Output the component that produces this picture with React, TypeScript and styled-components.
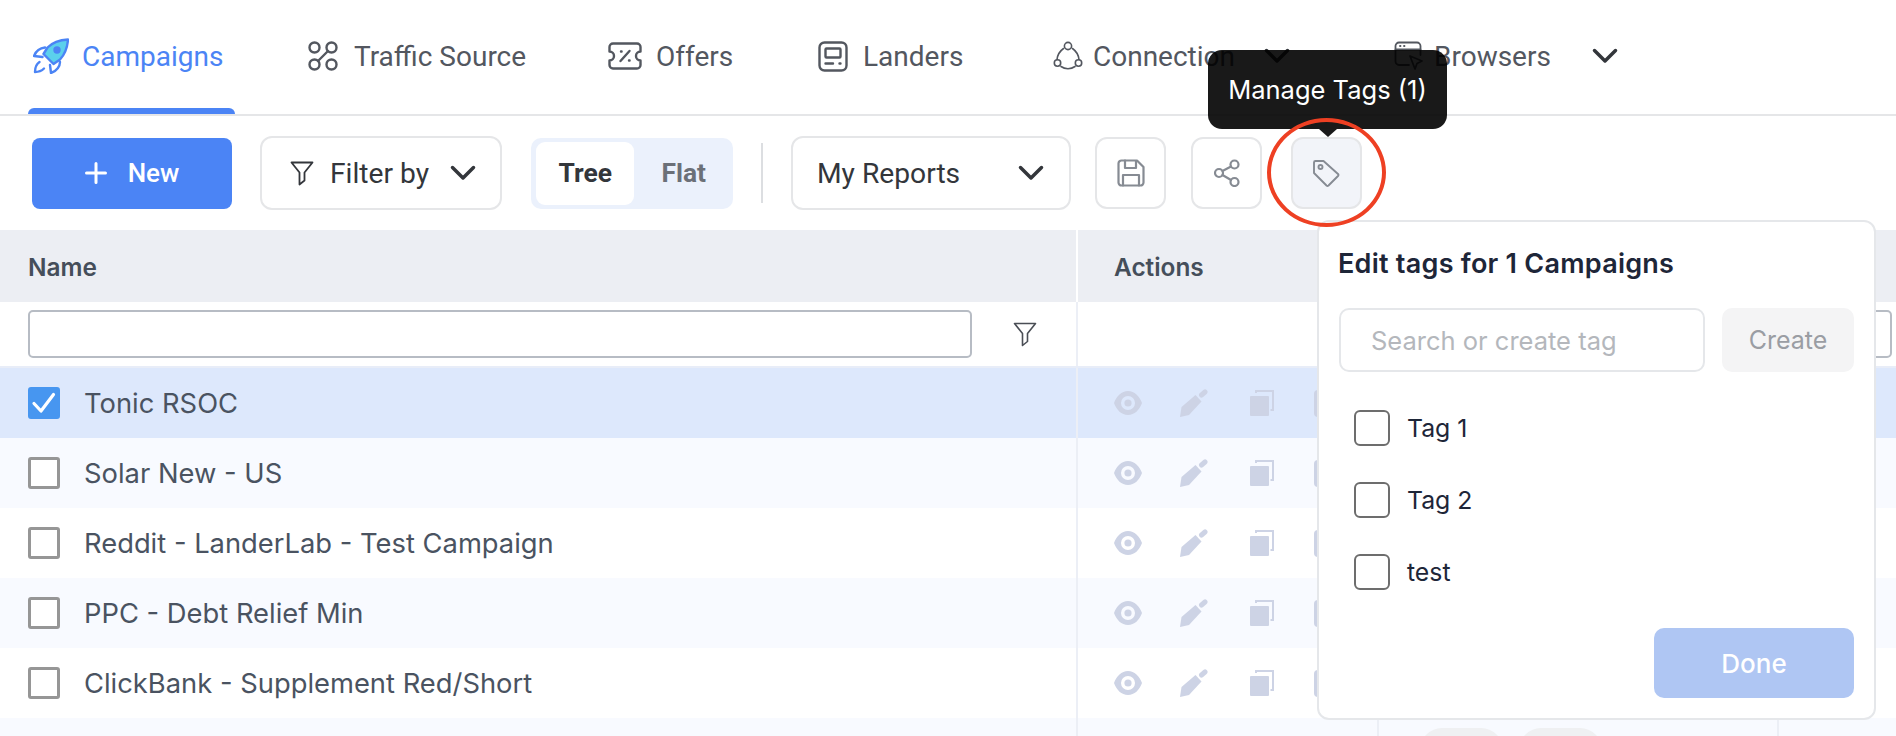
import React from "react";
import styled, { createGlobalStyle } from "styled-components";

const Global = createGlobalStyle`
  html, body { margin: 0; padding: 0; background: #fff; overflow: hidden; }
  body { width: 1896px; height: 736px; font-family: Roboto, "Liberation Sans", sans-serif; }
  * { box-sizing: border-box; }
`;

const Page = styled.div`
  position: relative;
  width: 1896px;
  height: 736px;
  overflow: hidden;
  background: #fff;
`;

/* ---------- top navigation ---------- */
const Nav = styled.nav`
  display: flex;
  align-items: center;
  height: 116px;
  padding: 0 0 0 28px;
  border-bottom: 2px solid #e5e6e8;
`;
const Tab = styled.div<{ $active?: boolean; $width: number; $gap?: number }>`
  position: relative;
  display: flex;
  align-items: center;
  gap: ${(p) => p.$gap ?? 15}px;
  width: ${(p) => p.$width}px;
  height: 114px;
  padding-left: 5px;
  padding-bottom: 2px;
  font-size: 28px;
  color: ${(p) => (p.$active ? "#4b84f5" : "#53575f")};
  ${(p) =>
    p.$active &&
    `&::after { content: ""; position: absolute; left: 0; bottom: 0; width: 207px; height: 6px; background: #4b84f5; border-radius: 6px 6px 0 0; }`}
`;
const TabIcon = styled.svg`
  flex: none;
  fill: none;
  stroke: currentColor;
  stroke-width: 2.4;
  stroke-linecap: round;
  stroke-linejoin: round;
`;
const TabChevron = styled.svg<{ $left: number }>`
  flex: none;
  margin-left: ${(p) => p.$left}px;
  fill: none;
  stroke: #33363b;
  stroke-width: 3.5;
  stroke-linecap: round;
  stroke-linejoin: round;
`;

/* ---------- toolbar ---------- */
const Toolbar = styled.div`
  display: flex;
  align-items: center;
  height: 114px;
  padding-left: 32px;
`;
const NewButton = styled.button`
  display: flex;
  align-items: center;
  justify-content: center;
  gap: 21px;
  width: 200px;
  height: 71px;
  margin-right: 28px;
  border: 0;
  border-radius: 8px;
  background: #4b84f5;
  color: #fff;
  font: 500 26px Roboto, sans-serif;
`;
const SelectButton = styled.div<{ $width: number; $pl: number; $gap: number; $mr: number }>`
  display: flex;
  align-items: center;
  gap: ${(p) => p.$gap}px;
  width: ${(p) => p.$width}px;
  height: 74px;
  margin-right: ${(p) => p.$mr}px;
  padding-left: ${(p) => p.$pl}px;
  border: 2px solid #e5e6e8;
  border-radius: 12px;
  background: #fff;
  color: #33363b;
  font-size: 28.2px;
`;
const SelectLabel = styled.span<{ $width: number }>`
  width: ${(p) => p.$width}px;
  white-space: nowrap;
`;
const Toggle = styled.div`
  display: flex;
  align-items: center;
  width: 202px;
  height: 71px;
  margin-right: 28px;
  padding: 0 5px;
  border-radius: 10px;
  background: #ebf1fc;
`;
const ToggleItem = styled.div<{ $on?: boolean }>`
  display: flex;
  align-items: center;
  justify-content: center;
  width: ${(p) => (p.$on ? 99 : 94)}px;
  height: 63px;
  padding-left: ${(p) => (p.$on ? 0 : 5)}px;
  border-radius: 9px;
  background: ${(p) => (p.$on ? "#fff" : "transparent")};
  color: ${(p) => (p.$on ? "#33363b" : "#6b7078")};
  font-size: 26.4px;
  font-weight: 700;
`;
const Separator = styled.div`
  width: 2px;
  height: 60px;
  margin-right: 28px;
  background: #dcdee1;
`;
const IconButton = styled.button<{ $on?: boolean; $mr: number }>`
  display: flex;
  align-items: center;
  justify-content: center;
  width: 71px;
  height: 72px;
  margin-right: ${(p) => p.$mr}px;
  padding: 0;
  border: 2px solid #e5e6e8;
  border-radius: 12px;
  background: ${(p) => (p.$on ? "#f2f4f9" : "#fff")};
`;
const ToolIcon = styled.svg<{ $thin?: boolean }>`
  fill: none;
  stroke: #868b93;
  stroke-width: ${(p) => (p.$thin ? 1.9 : 2.2)};
  stroke-linecap: round;
  stroke-linejoin: round;
`;

/* ---------- table ---------- */
const COLS = "1076px 301px 400px 119px";
const HeaderRow = styled.div`
  display: grid;
  grid-template-columns: ${COLS};
  height: 72px;
  background: #eceef3;
  color: #454e5a;
  font-family: Inter, Roboto, sans-serif;
  font-size: 24.4px;
  font-weight: 600;
`;
const HeaderCell = styled.div<{ $pl: number; $sep?: boolean }>`
  display: flex;
  align-items: center;
  padding-top: 1px;
  padding-left: ${(p) => p.$pl}px;
  ${(p) => p.$sep && "border-left: 2px solid #fff;"}
  white-space: nowrap;
  overflow: hidden;
`;
const FilterRow = styled.div`
  display: grid;
  grid-template-columns: ${COLS};
  height: 66px;
  border-bottom: 2px solid #e8edf8;
`;
const FilterCell = styled.div<{ $sep?: boolean }>`
  display: flex;
  align-items: center;
  justify-content: flex-end;
  padding: 0 4px 0 0;
  ${(p) => p.$sep && "border-left: 2px solid #eceff6;"}
`;
const NameFilterCell = styled.div`
  display: flex;
  align-items: center;
  gap: 41px;
  padding-left: 28px;
`;
const FilterInput = styled.div<{ $width: number }>`
  width: ${(p) => p.$width}px;
  height: 48px;
  border: 2px solid #b7bcc4;
  border-radius: 5px;
  background: #fff;
`;
const Row = styled.div<{ $bg: string }>`
  display: grid;
  grid-template-columns: ${COLS};
  height: 70px;
  background: ${(p) => p.$bg};
`;
const NameCell = styled.div`
  display: flex;
  align-items: center;
  gap: 24px;
  padding-left: 28px;
  color: #4a5361;
  font-family: Inter, Roboto, sans-serif;
  font-size: 27.35px;
  white-space: nowrap;
`;
const Check = styled.span<{ $on?: boolean }>`
  display: flex;
  align-items: center;
  justify-content: center;
  flex: none;
  width: 32px;
  height: 32px;
  border: 3.5px solid ${(p) => (p.$on ? "#4796f0" : "#969696")};
  border-radius: 3px;
  background: ${(p) => (p.$on ? "#4796f0" : "#fff")};
`;
const Cell = styled.div<{ $sep?: boolean }>`
  display: flex;
  align-items: center;
  ${(p) => p.$sep && "border-left: 2px solid #eceff6;"}
`;
const ActionsCell = styled(Cell)`
  padding-left: 36px;
  border-left: 2px solid #eceff6;
  overflow: hidden;
`;
const ActionBox = styled.span<{ $pitch: number }>`
  display: flex;
  flex: none;
  width: ${(p) => p.$pitch}px;
`;
const ActionIcon = styled.svg`
  display: block;
  fill: #cdd3e5;
`;
const TagsCell = styled(Cell)`
  gap: 16px;
  padding-left: 41px;
`;
const Chip = styled.span`
  width: 83px;
  height: 50px;
  border-radius: 22px;
  background: #eff0f2;
`;

/* ---------- overlays ---------- */
const Tooltip = styled.div`
  position: absolute;
  left: 1208px;
  top: 50px;
  display: flex;
  align-items: center;
  justify-content: center;
  width: 239px;
  height: 79px;
  border-radius: 14px;
  background: rgba(0, 0, 0, 0.9);
  color: #fff;
  font-family: Inter, Roboto, sans-serif;
  font-size: 25.5px;
  white-space: nowrap;
  z-index: 3;
  &::after {
    content: "";
    position: absolute;
    left: 111px;
    bottom: -8px;
    border-left: 9px solid transparent;
    border-right: 9px solid transparent;
    border-top: 8px solid #1a1a1a;
  }
`;
const Highlight = styled.div`
  position: absolute;
  left: 1267px;
  top: 118px;
  width: 119px;
  height: 109px;
  border: 4px solid #ee4023;
  border-radius: 50%;
  z-index: 4;
`;
const Popover = styled.div`
  position: absolute;
  left: 1317px;
  top: 220px;
  display: flex;
  flex-direction: column;
  width: 559px;
  height: 500px;
  padding: 0 20px 20px;
  border: 2px solid #e5e7ea;
  border-radius: 12px;
  background: #fff;
  font-family: Inter, Roboto, sans-serif;
  z-index: 2;
`;
const PopTitle = styled.div`
  margin: 23px 0 0 -1px;
  height: 38px;
  line-height: 38px;
  color: #1e2638;
  font-size: 27px;
  font-weight: 600;
  letter-spacing: 0.25px;
  white-space: nowrap;
`;
const CreateRow = styled.div`
  display: flex;
  gap: 17px;
  margin-top: 25px;
`;
const TagInput = styled.div`
  display: flex;
  align-items: center;
  width: 366px;
  height: 64px;
  padding-left: 30px;
  border: 2px solid #e5e7ea;
  border-radius: 10px;
  color: #b4b7bc;
  font-size: 25.5px;
  white-space: nowrap;
`;
const CreateButton = styled.div`
  display: flex;
  align-items: center;
  justify-content: center;
  width: 132px;
  height: 64px;
  border-radius: 10px;
  background: #f4f4f5;
  color: #9a9da3;
  font-size: 25px;
`;
const TagList = styled.div`
  display: flex;
  flex-direction: column;
  gap: 36px;
  margin-top: 38px;
  padding-left: 15px;
`;
const TagItem = styled.label`
  display: flex;
  align-items: center;
  gap: 17px;
  color: #1e2638;
  font-size: 24.8px;
`;
const TagBox = styled.span`
  flex: none;
  width: 36px;
  height: 36px;
  border: 2px solid #6d6d6d;
  border-radius: 6px;
  background: #fff;
`;
const DoneButton = styled.div`
  display: flex;
  align-items: center;
  justify-content: center;
  align-self: flex-end;
  width: 200px;
  height: 70px;
  margin-top: auto;
  border-radius: 10px;
  background: #afc6f3;
  color: #fff;
  font-size: 26px;
  font-weight: 500;
`;

/* ---------- drawings ---------- */
const Chevron = ({ left }: { left: number }) => (
  <TabChevron $left={left} width="26" height="16" viewBox="0 0 26 16">
    <path d="M2.5 2.5L13 13L23.5 2.5" />
  </TabChevron>
);
const Rocket = () => (
  <svg width="36" height="36" viewBox="0 0 36 36" fill="none" stroke="#4b84f5" strokeWidth="2.4" strokeLinecap="round" strokeLinejoin="round" style={{ flex: "none" }}>
    <path d="M35 1.5C27 2 20 4 14.5 9.5L10.5 16L20.5 26L27 21.5C32 16 34.5 9 35 1.5Z" fill="#5bd0ec" />
    <circle cx="24" cy="12" r="3.7" fill="#4b84f5" stroke="none" />
    <path d="M12 9.5C7 10 3 13 1 18L9.5 19" />
    <path d="M27 24C27 28 24 33 18 35L17 27" />
    <path d="M6.5 24C3.5 26 2 30 2 34C5 34 8.5 33 11 30.5" />
  </svg>
);
const TrafficIcon = () => (
  <TabIcon width="30" height="30" viewBox="0 0 30 30">
    <circle cx="6.5" cy="6.5" r="5" />
    <circle cx="23.5" cy="6.5" r="5" />
    <circle cx="6.5" cy="23.5" r="5" />
    <circle cx="23.5" cy="23.5" r="5" />
    <path d="M20 10L10 20" />
  </TabIcon>
);
const OfferIcon = () => (
  <TabIcon width="34" height="28" viewBox="0 0 34 28">
    <path d="M5 1.5H29A3.5 3.5 0 0 1 32.5 5V9.5A4.5 4.5 0 0 0 32.5 18.5V23A3.5 3.5 0 0 1 29 26.5H5A3.5 3.5 0 0 1 1.5 23V18.5A4.5 4.5 0 0 0 1.5 9.5V5A3.5 3.5 0 0 1 5 1.5Z" />
    <path d="M21.5 9L12.5 19M13 9.5H13.6M21 18.5H21.6" />
  </TabIcon>
);
const LanderIcon = () => (
  <TabIcon width="30" height="31" viewBox="0 0 30 31">
    <rect x="1.5" y="1.5" width="27" height="28" rx="5" />
    <rect x="7.5" y="7.5" width="15" height="9" rx="1" />
    <path d="M7.5 22.5H15M21.5 22.5H22.5" />
  </TabIcon>
);
const ConnectionIcon = () => (
  <TabIcon width="30" height="30" viewBox="0 0 30 30" style={{ strokeWidth: 1.6 }}>
    <circle cx="15" cy="5" r="3.6" />
    <circle cx="4.5" cy="22" r="3.2" />
    <circle cx="25.5" cy="22" r="3.2" />
    <path d="M10.5 7.5C7 10 4.5 14 4 18.5M19.5 7.5C23 10 25.5 14 26 18.5M8 25.5C12 28.5 18 28.5 22 25.5" />
  </TabIcon>
);
const BrowserIcon = () => (
  <TabIcon width="29" height="30" viewBox="0 0 29 30" style={{ strokeWidth: 1.8 }}>
    <path d="M15 24H5A3.5 3.5 0 0 1 1.5 20.5V5A3.5 3.5 0 0 1 5 1.5H23A3.5 3.5 0 0 1 26.5 5V14" />
    <path d="M1.5 8.5H26.5M6 5H6.5M10 5H10.5" />
    <path d="M16 15L28 20L23 22.5L21 28Z" />
  </TabIcon>
);
const Funnel = ({ size, color, weight }: { size: number; color: string; weight: number }) => (
  <svg width={size} height={size + 1} viewBox="0 0 24 25" fill="none" stroke={color} strokeWidth={weight} strokeLinejoin="round" style={{ flex: "none" }}>
    <path d="M1.5 1.5H22.5L14.5 11.5V19.5L9.5 23.5V11.5Z" />
  </svg>
);
const Tick = () => (
  <svg width="26" height="26" viewBox="0 0 26 26" fill="none" stroke="#fff" strokeWidth="3.2" strokeLinecap="round" strokeLinejoin="round">
    <path d="M3 13.5L10 21L22.5 4.5" />
  </svg>
);
const Eye = () => (
  <ActionIcon width="28" height="24" viewBox="0 0 28 24">
    <path fillRule="evenodd" d="M14 0C7.5 0 2.5 5 0 12C2.5 19 7.5 24 14 24C20.5 24 25.5 19 28 12C25.5 5 20.5 0 14 0ZM14 5A7 7 0 1 1 14 19A7 7 0 1 1 14 5Z" />
    <circle cx="14" cy="12" r="3.6" />
  </ActionIcon>
);
const Pencil = () => (
  <ActionIcon width="28" height="28" viewBox="0 0 28 28">
    <path d="M0 28L1.5 18L15.5 6L21.5 12.5L9 26Z" />
    <path d="M21.5 6L25 3" stroke="#cdd3e5" strokeWidth="5" strokeLinecap="round" />
  </ActionIcon>
);
const Copy = () => (
  <ActionIcon width="24" height="26" viewBox="0 0 24 26">
    <rect x="0" y="6" width="19" height="20" rx="1" />
    <path d="M6 3V1H23V20H20.5" fill="none" stroke="#cdd3e5" strokeWidth="2" />
  </ActionIcon>
);
const Peek = () => (
  <ActionIcon width="24" height="27" viewBox="0 0 24 27">
    <rect x="0" y="0" width="24" height="27" rx="4" />
  </ActionIcon>
);

const ROWS = [
  { name: "Tonic RSOC", bg: "#dde8fc", on: true },
  { name: "Solar New - US", bg: "#f8faff" },
  { name: "Reddit - LanderLab - Test Campaign", bg: "#fff" },
  { name: "PPC - Debt Relief Min", bg: "#f8faff" },
  { name: "ClickBank - Supplement Red/Short", bg: "#fff" },
];

export default function App() {
  return (
    <Page>
      <Global />
      <Nav>
        <Tab $active $width={275} $gap={13}>
          <Rocket />
          Campaigns
        </Tab>
        <Tab $width={300} $gap={16}>
          <TrafficIcon />
          Traffic Source
        </Tab>
        <Tab $width={210} $gap={14}>
          <OfferIcon />
          Offers
        </Tab>
        <Tab $width={235}>
          <LanderIcon />
          Landers
        </Tab>
        <Tab $width={341} $gap={10}>
          <ConnectionIcon />
          Connection
          <Chevron left={19} />
        </Tab>
        <Tab $width={240} $gap={11}>
          <BrowserIcon />
          Browsers
          <Chevron left={30} />
        </Tab>
      </Nav>

      <Toolbar>
        <NewButton>
          <svg width="22" height="22" viewBox="0 0 22 22" stroke="#fff" strokeWidth="3" strokeLinecap="round">
            <path d="M11 1.5V20.5M1.5 11H20.5" />
          </svg>
          New
        </NewButton>
        <SelectButton $width={242} $pl={28} $gap={16} $mr={29}>
          <Funnel size={24} color="#33363b" weight={1.8} />
          <SelectLabel $width={104}>Filter by</SelectLabel>
          <Chevron left={0} />
        </SelectButton>
        <Toggle>
          <ToggleItem $on>Tree</ToggleItem>
          <ToggleItem>Flat</ToggleItem>
        </Toggle>
        <Separator />
        <SelectButton $width={280} $pl={24} $gap={0} $mr={24}>
          <SelectLabel $width={201}>My Reports</SelectLabel>
          <Chevron left={0} />
        </SelectButton>
        <IconButton $mr={25}>
          <ToolIcon width="28" height="28" viewBox="0 0 28 28">
            <path d="M4.5 1.5H20L26.5 8V23.5A3 3 0 0 1 23.5 26.5H4.5A3 3 0 0 1 1.5 23.5V4.5A3 3 0 0 1 4.5 1.5Z" />
            <path d="M8 1.5V9H19V2M6 26.5V16H22V26.5" />
          </ToolIcon>
        </IconButton>
        <IconButton $mr={29}>
          <ToolIcon width="26" height="28" viewBox="0 0 26 28">
            <circle cx="20.5" cy="5.5" r="4" />
            <circle cx="5" cy="14" r="4" />
            <circle cx="20.5" cy="23" r="4" />
            <path d="M8.5 12L17 7.5M8.5 16L17 21" />
          </ToolIcon>
        </IconButton>
        <IconButton $on $mr={0}>
          <ToolIcon $thin width="27" height="27" viewBox="0 0 27 27">
            <path d="M2.5 1H10.5L25 14A1.5 1.5 0 0 1 25 16L15.5 25.5A1.5 1.5 0 0 1 13.5 25.5L1 13V2.5A1.5 1.5 0 0 1 2.5 1Z" />
            <circle cx="7.5" cy="7" r="2" />
          </ToolIcon>
        </IconButton>
      </Toolbar>

      <HeaderRow>
        <HeaderCell $pl={28}>Name</HeaderCell>
        <HeaderCell $pl={36} $sep>Actions</HeaderCell>
        <HeaderCell $pl={41} />
        <HeaderCell $pl={20}>Status</HeaderCell>
      </HeaderRow>
      <FilterRow>
        <NameFilterCell>
          <FilterInput $width={944} />
          <Funnel size={24} color="#4a4e55" weight={1.6} />
        </NameFilterCell>
        <FilterCell $sep />
        <FilterCell />
        <FilterCell>
          <FilterInput $width={100} />
        </FilterCell>
      </FilterRow>
      {ROWS.map((r) => (
        <Row key={r.name} $bg={r.bg}>
          <NameCell>
            <Check $on={r.on}>{r.on && <Tick />}</Check>
            {r.name}
          </NameCell>
          <ActionsCell>
            <ActionBox $pitch={66}><Eye /></ActionBox>
            <ActionBox $pitch={70}><Pencil /></ActionBox>
            <ActionBox $pitch={64}><Copy /></ActionBox>
            <ActionBox $pitch={30}><Peek /></ActionBox>
          </ActionsCell>
          <Cell />
          <Cell />
        </Row>
      ))}
      <Row $bg="#f8faff">
        <NameCell />
        <Cell $sep />
        <TagsCell $sep>
          <Chip />
          <Chip />
        </TagsCell>
        <Cell $sep />
      </Row>

      <Tooltip>Manage Tags (1)</Tooltip>
      <Highlight />
      <Popover>
        <PopTitle>Edit tags for 1 Campaigns</PopTitle>
        <CreateRow>
          <TagInput>Search or create tag</TagInput>
          <CreateButton>Create</CreateButton>
        </CreateRow>
        <TagList>
          <TagItem><TagBox />Tag 1</TagItem>
          <TagItem><TagBox />Tag 2</TagItem>
          <TagItem><TagBox />test</TagItem>
        </TagList>
        <DoneButton>Done</DoneButton>
      </Popover>
    </Page>
  );
}
